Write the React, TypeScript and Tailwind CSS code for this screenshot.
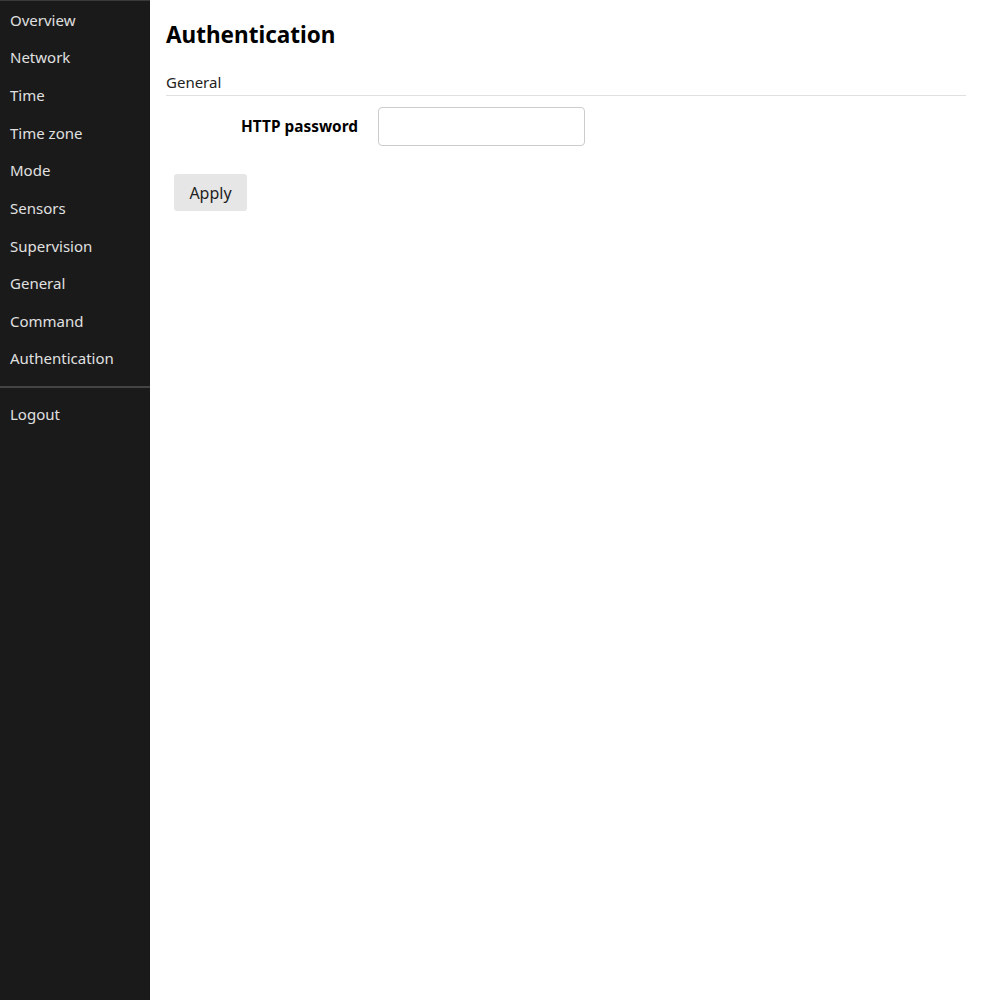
const navItems = [
  "Overview",
  "Network",
  "Time",
  "Time zone",
  "Mode",
  "Sensors",
  "Supervision",
  "General",
  "Command",
  "Authentication",
];

const Sidebar = () => {
  return (
    <nav className="w-[150px] shrink-0 min-h-screen bg-[#1a1a1a] border-t border-[#3a3a3a] text-[#e0e0e0]">
      <ul>
        {navItems.map((item) => (
          <li key={item} className="h-[37.67px] px-[10px] flex items-center">
            {item}
          </li>
        ))}
      </ul>
      <div className="mt-[8px] border-t-2 border-[#444]" />
      <div className="h-[37.67px] px-[10px] mt-[8px] flex items-center">Logout</div>
    </nav>
  );
};

export default function App() {
  return (
    <div className="flex min-h-screen bg-white text-[15px] font-['Noto_Sans',sans-serif]">
      <Sidebar />
      <main className="flex-1 pl-4 pr-8">
        <h1 className="mt-[19px] text-[22.5px] leading-[32px] font-bold text-black">
          Authentication
        </h1>
        <div className="mt-[19px] pb-[1px] border-b border-[#e0e0e0] text-[#222] leading-[24px]">
          General
        </div>
        <div className="mt-[11px] flex items-center">
          <label className="w-[192px] text-right font-bold text-black text-[15.4px]">
            HTTP password
          </label>
          <input
            type="password"
            className="ml-5 w-[207px] h-[39px] border border-[#ccc] rounded-[4px] px-2"
          />
        </div>
        <button className="mt-[28px] ml-2 w-[73px] h-[37px] bg-[#e6e6e6] rounded-[3px] text-[#222] text-[16px]">
          Apply
        </button>
      </main>
    </div>
  );
}
